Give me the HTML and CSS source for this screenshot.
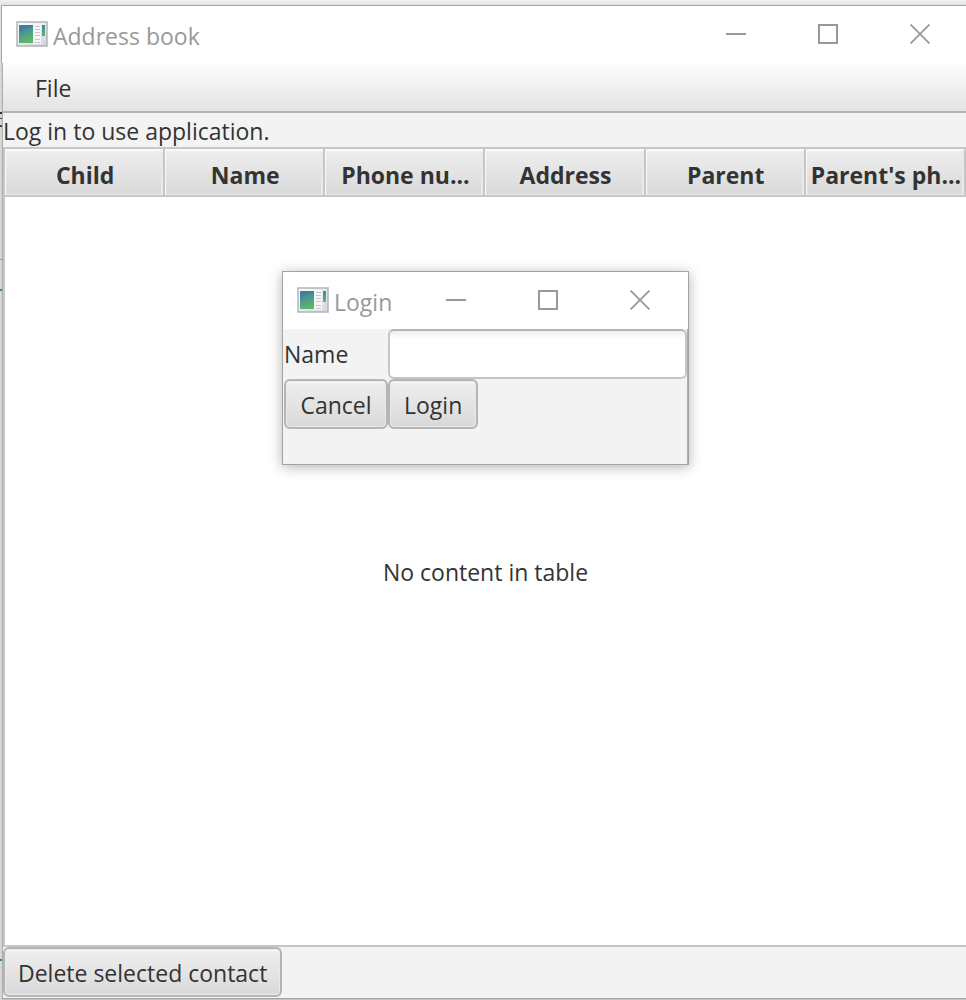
FILE: index.html
```
<!DOCTYPE html>
<html lang="en">
<head>
<meta charset="utf-8">
<title>Address book</title>
<link rel="stylesheet" href="styles.css">
</head>
<body>
<svg class="defs" width="0" height="0" aria-hidden="true">
  <defs>
    <linearGradient id="pane" x1="0" y1="0" x2="0.3" y2="1"><stop offset="0" stop-color="#4a7fa8"/><stop offset="0.45" stop-color="#4b9391"/><stop offset="1" stop-color="#5fb56c"/></linearGradient>
    <linearGradient id="frame" x1="0" y1="0" x2="1" y2="1"><stop offset="0" stop-color="#ffffff"/><stop offset="1" stop-color="#d3d5db"/></linearGradient>
    <symbol id="app" viewBox="0 0 32 26">
      <rect x="1" y="1" width="30" height="24" fill="url(#frame)" stroke="#b0b5ba" stroke-width="1.500"/>
      <rect x="3" y="4" width="14" height="18" fill="url(#pane)"/>
      <path d="M3 12Q8 6 17 6V4H3Z" fill="#3f719e" opacity=".45"/>
      <rect x="17" y="3" width="8" height="20" fill="#f5f6f8"/>
      <path d="M19 5.500h5M19 8.500h5M19 11.500h5M19 14.500h5M19 18.500h5M19 21.500h5" stroke="#c3c6ca"/>
      <rect x="26" y="4" width="3" height="11" fill="url(#pane)"/>
    </symbol>
    <symbol id="min" viewBox="0 0 20 20"><path d="M0 10H20" stroke="#999" stroke-width="2"/></symbol>
    <symbol id="max" viewBox="0 0 20 20"><rect x="1" y="1" width="18" height="18" fill="none" stroke="#999" stroke-width="2"/></symbol>
    <symbol id="close" viewBox="0 0 20 20"><path d="M.5.500 19.500 19.500M19.500.500.5 19.500" stroke="#999" stroke-width="1.800"/></symbol>
  </defs>
</svg>
<main class="window">
  <header class="titlebar">
    <svg class="app-icon" aria-hidden="true"><use href="#app"/></svg>
    <h1 class="title">Address book</h1>
    <div class="controls">
      <button class="control" aria-label="Minimize"><svg class="glyph"><use href="#min"/></svg></button>
      <button class="control" aria-label="Maximize"><svg class="glyph"><use href="#max"/></svg></button>
      <button class="control" aria-label="Close"><svg class="glyph"><use href="#close"/></svg></button>
    </div>
  </header>
  <div class="content">
    <nav class="menubar"><button class="menu">File</button></nav>
    <p class="status">Log in to use application.</p>
    <div class="table-area">
      <table class="contacts">
        <thead><tr><th>Child</th><th>Name</th><th>Phone nu...</th><th>Address</th><th>Parent</th><th>Parent's ph...</th></tr></thead>
        <tbody><tr><td colspan="6">No content in table</td></tr></tbody>
      </table>
    </div>
    <footer class="actions"><button class="button">Delete selected contact</button></footer>
  </div>
</main>
<section class="dialog" role="dialog" aria-labelledby="login-title">
  <header class="titlebar dialog-titlebar">
    <svg class="app-icon" aria-hidden="true"><use href="#app"/></svg>
    <h2 class="title" id="login-title">Login</h2>
    <div class="controls">
      <button class="control" aria-label="Minimize"><svg class="glyph"><use href="#min"/></svg></button>
      <button class="control" aria-label="Maximize"><svg class="glyph"><use href="#max"/></svg></button>
      <button class="control" aria-label="Close"><svg class="glyph"><use href="#close"/></svg></button>
    </div>
  </header>
  <form class="form">
    <label class="label" for="name">Name</label>
    <input class="field" id="name" type="text">
    <button class="button" type="button">Cancel</button>
    <button class="button login" type="button">Login</button>
  </form>
</section>
</body>
</html>
```
FILE: styles.css
```
* { box-sizing: border-box; }

body {
  margin: 0;
  min-height: 100vh;
  display: flex;
  padding: 5px 0 1px 1px;
  background:
    linear-gradient(#2a87a4, #2a87a4) 0 289px / 3px 2px no-repeat,
    linear-gradient(#2a87a4, #2a87a4) 0 959px / 3px 2px no-repeat,
    linear-gradient(#333, #333) 0 112px / 3px 2px no-repeat,
    linear-gradient(#444, #444) 0 118px / 3px 1px no-repeat,
    linear-gradient(#444, #444) 0 125px / 3px 2px no-repeat,
    linear-gradient(#555, #555) 2px 642px / 1px 11px no-repeat,
    linear-gradient(#999, #999) 0 259px / 3px 1px no-repeat,
    linear-gradient(90deg, #dcdcdc, #c8c8c8) 0 63px / 3px 100% no-repeat,
    linear-gradient(#f2f2f2, #e2e2e2 5px, #c4c4c4);
  font-family: "Open Sans", "Noto Sans", sans-serif;
  font-size: 23px;
  line-height: 32px;
  color: #333;
}

button, input { font: inherit; color: inherit; }

.defs { position: absolute; }

.window {
  flex: 1;
  min-width: 0;
  display: flex;
  flex-direction: column;
  border: 1px solid #a3a3a3;
  border-right: 0;
  border-left-color: transparent;
}

.titlebar {
  display: flex;
  align-items: center;
  height: 57px;
  padding-left: 14px;
  background: #fff;
  box-shadow: -1px 0 #a3a3a3;
}

.app-icon { width: 32px; height: 26px; flex: none; margin-bottom: 2px; }

.title {
  margin: 2px 0 0 5px;
  font-size: 23px;
  font-weight: 400;
  color: #999;
}

.controls { display: flex; margin-left: auto; margin-bottom: 2px; }

.control {
  width: 92px;
  height: 54px;
  display: flex;
  align-items: center;
  justify-content: center;
  padding: 0;
  border: 0;
  background: none;
}

.dialog-titlebar { padding-right: 2px; box-shadow: none; }

.glyph { width: 20px; height: 20px; }

.content {
  flex: 1;
  display: flex;
  flex-direction: column;
  background: #f3f3f3;
  border-left: 1px solid #adadad;
}

.menubar {
  height: 50px;
  display: flex;
  border-bottom: 2px solid #b4b4b4;
  background: linear-gradient(#fdfdfd, #e3e3e3);
}

.menu { padding: 2px 32px 0; border: 0; background: none; }

.status { margin: 0; height: 34px; line-height: 36px; }

.table-area {
  flex: 1;
  display: flex;
  border: 2px solid #c6c6c6;
  border-right: 0;
  background: #fff;
}

.contacts { width: 100%; table-layout: fixed; border-collapse: separate; border-spacing: 0; }

.contacts th {
  height: 48px;
  padding: 5px 0 0 2px;
  border-right: 2px solid #c6c6c6;
  border-bottom: 2px solid #c6c6c6;
  background: linear-gradient(#efefef, #d9d9d9);
  box-shadow: inset 1px 2px #fafafa, inset -2px -1px #e9e9e9;
  white-space: nowrap;
}

.contacts td { padding: 2px 0 0; text-align: center; }

.actions { display: flex; height: 51px; }

.button {
  height: 50px;
  padding: 1px 13px 0;
  border: 2px solid #b5b5b5;
  border-radius: 6px;
  background: linear-gradient(#efefef, #d9d9d9);
  box-shadow: inset 0 0 0 1px #e9e9e9, inset 0 2px #fafafa;
  white-space: nowrap;
}

.dialog {
  position: absolute;
  left: 282px;
  top: 271px;
  width: 407px;
  border: 1px solid #a3a3a3;
  background: #f3f3f3;
  box-shadow: 0 2px 12px rgba(0, 0, 0, .3);
}

.form {
  display: grid;
  grid-template-columns: 104px 1fr;
  grid-template-rows: 50px 50px;
  padding: 0 0 35px 1px;
  border-right: 1px solid #adadad;
}

.label { align-self: center; }

.field {
  width: 100%;
  height: 50px;
  padding: 0 12px;
  border: 2px solid #c6c6c6;
  border-top-color: #b5b5b5;
  border-radius: 6px;
  background: linear-gradient(#efefef, #fff 8px);
}

.login { justify-self: start; padding: 1px 14px 0; }
```
